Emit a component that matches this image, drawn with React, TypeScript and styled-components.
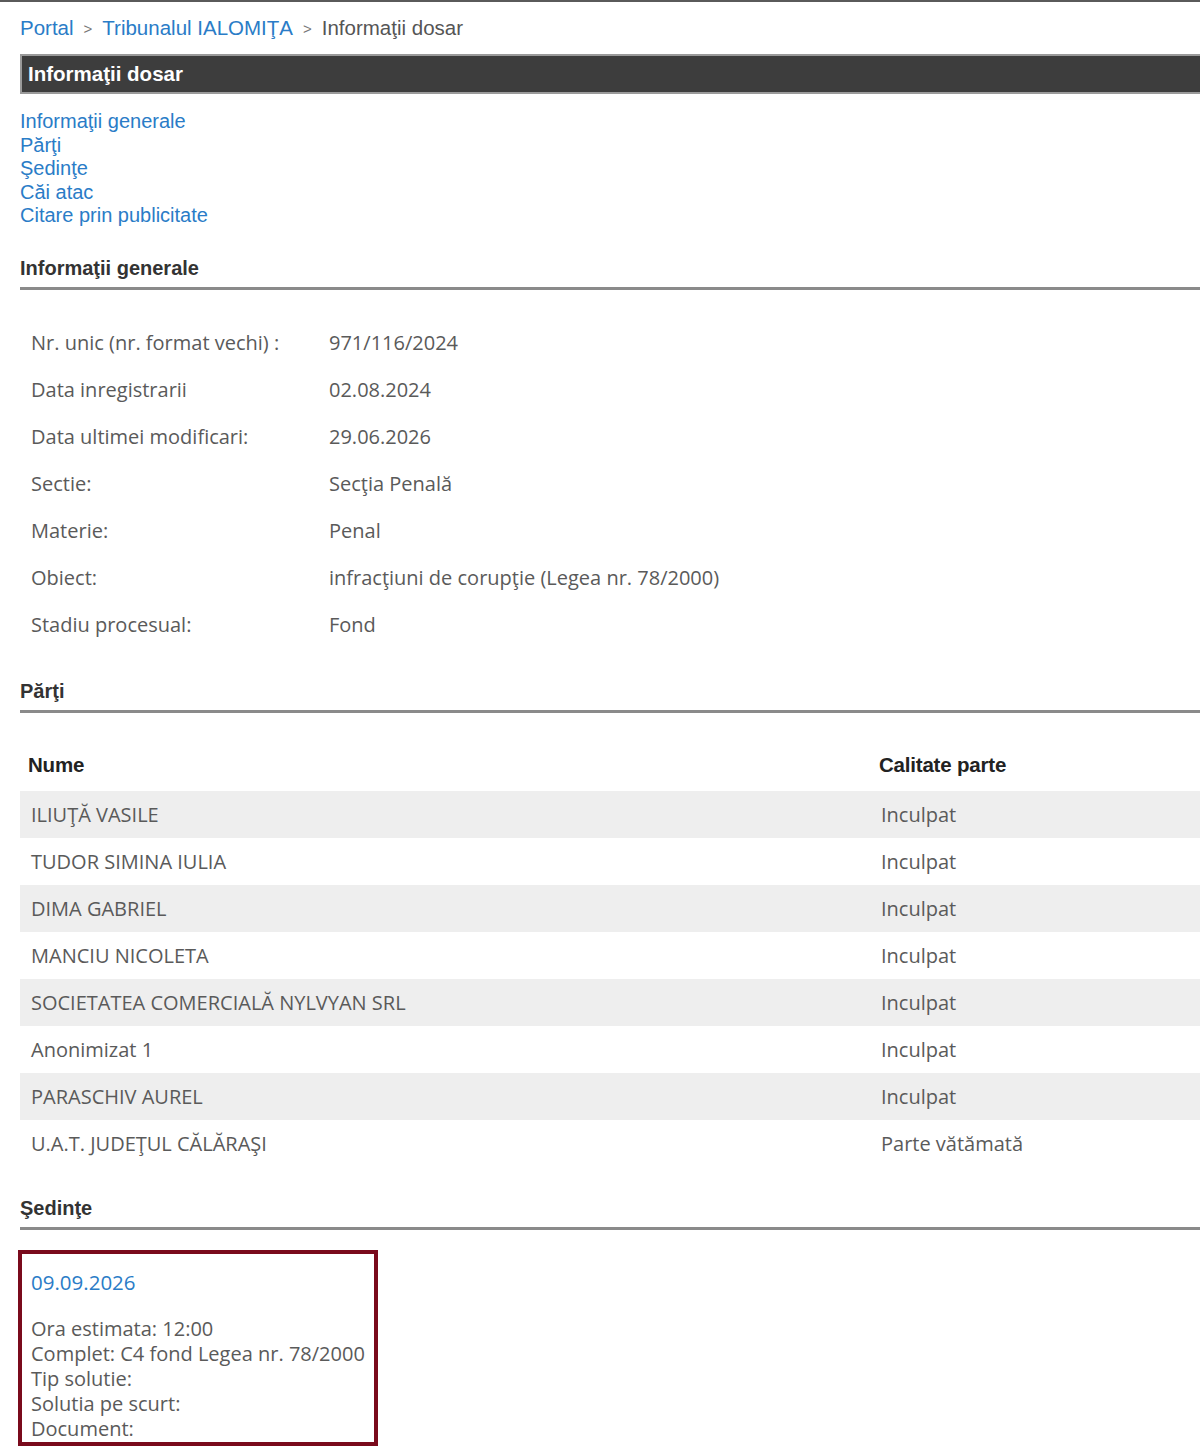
import styled, { createGlobalStyle } from 'styled-components'

const GlobalStyle = createGlobalStyle`
    body {
        margin: 0;
        background: #fff;
        font-family: "Liberation Sans", Arial, sans-serif;
        overflow: hidden;
    }
`

const Page = styled.div`
    border-top: 2px solid #5a5a5a;
    padding: 0 0 0 20px;
    width: 1180px;
    overflow: hidden;
`

const Breadcrumb = styled.div`
    display: flex;
    align-items: center;
    gap: 10px;
    height: 52px;
    font-size: 20.5px;
    color: #555;
    a {
        color: #2a7cc7;
        text-decoration: none;
    }
    .sep {
        font-size: 15px;
        color: #777;
    }
`

const TitleBar = styled.div`
    height: 36px;
    margin-right: -20px;
    background: #3d3d3d;
    border: 2px solid #9a9a9a;
    border-right: none;
    display: flex;
    align-items: center;
    padding-left: 6px;
    color: #fff;
    font-size: 20.5px;
    font-weight: bold;
`

const Nav = styled.nav`
    display: flex;
    flex-direction: column;
    padding-top: 16px;
    a {
        color: #2a7cc7;
        text-decoration: none;
        font-size: 20px;
        line-height: 23.5px;
    }
`

const SectionTitle = styled.h2<{ $top: number }>`
    margin: ${p => p.$top}px 0 0 0;
    font-size: 20px;
    font-weight: bold;
    color: #333;
    line-height: 22px;
    padding-bottom: 8px;
    border-bottom: 3px solid #8a8a8a;
`

const Table = styled.table<{ $top: number }>`
    border-collapse: collapse;
    table-layout: fixed;
    width: 100%;
    margin-top: ${p => p.$top}px;
    font-family: "Open Sans", "Liberation Sans", sans-serif;
    font-size: 20px;
    color: #5a5a5a;
    td, th {
        height: 47px;
        padding: 0 0 0 11px;
        text-align: left;
        vertical-align: middle;
        white-space: nowrap;
    }
`

const HeadCell = styled.th<{ $pad: number }>`
    font-family: "Liberation Sans", Arial, sans-serif;
    font-weight: bold;
    color: #222;
    font-size: 20.5px;
    letter-spacing: -0.2px;
    && {
        height: 51px;
        padding-left: ${p => p.$pad}px;
    }
`

const PartyRow = styled.tr<{ $shaded: boolean }>`
    background: ${p => (p.$shaded ? '#eeeeee' : '#fff')};
`

const HearingBox = styled.div`
    box-sizing: border-box;
    margin-top: 20px;
    margin-left: -2px;
    width: 360px;
    height: 196px;
    border: 4px solid #7a0a1c;
    padding: 16px 0 0 9px;
    font-family: "Open Sans", "Liberation Sans", sans-serif;
    font-size: 20px;
    color: #5a5a5a;
    line-height: 25px;
`

const HearingDate = styled.a`
    display: block;
    color: #2a7cc7;
    text-decoration: none;
    font-size: 20.5px;
    margin-bottom: 21px;
`

const info: [string, string][] = [
    ['Nr. unic (nr. format vechi) :', '971/116/2024'],
    ['Data inregistrarii', '02.08.2024'],
    ['Data ultimei modificari:', '29.06.2026'],
    ['Sectie:', 'Secţia Penală'],
    ['Materie:', 'Penal'],
    ['Obiect:', 'infracţiuni de corupţie (Legea nr. 78/2000)'],
    ['Stadiu procesual:', 'Fond'],
]

const parties: [string, string][] = [
    ['ILIUŢĂ VASILE', 'Inculpat'],
    ['TUDOR SIMINA IULIA', 'Inculpat'],
    ['DIMA GABRIEL', 'Inculpat'],
    ['MANCIU NICOLETA', 'Inculpat'],
    ['SOCIETATEA COMERCIALĂ NYLVYAN SRL', 'Inculpat'],
    ['Anonimizat 1', 'Inculpat'],
    ['PARASCHIV AUREL', 'Inculpat'],
    ['U.A.T. JUDEŢUL CĂLĂRAŞI', 'Parte vătămată'],
]

export default function App() {
    return (
        <>
            <GlobalStyle />
            <Page>
                <Breadcrumb>
                    <a href="#">Portal</a>
                    <span className="sep">&gt;</span>
                    <a href="#">Tribunalul IALOMIŢA</a>
                    <span className="sep">&gt;</span>
                    <span>Informaţii dosar</span>
                </Breadcrumb>
                <TitleBar>Informaţii dosar</TitleBar>
                <Nav>
                    <a href="#">Informaţii generale</a>
                    <a href="#">Părţi</a>
                    <a href="#">Şedinţe</a>
                    <a href="#">Căi atac</a>
                    <a href="#">Citare prin publicitate</a>
                </Nav>

                <SectionTitle $top={29}>Informaţii generale</SectionTitle>
                <Table $top={29}>
                    <colgroup>
                        <col style={{ width: 298 }} />
                        <col />
                    </colgroup>
                    <tbody>
                        { info.map(([label, value]) =>
                            <tr key={label}>
                                <td>{ label }</td>
                                <td>{ value }</td>
                            </tr>)
                        }
                    </tbody>
                </Table>

                <SectionTitle $top={32}>Părţi</SectionTitle>
                <Table $top={27}>
                    <colgroup>
                        <col style={{ width: 850 }} />
                        <col />
                    </colgroup>
                    <thead>
                        <tr>
                            <HeadCell $pad={8}>Nume</HeadCell>
                            <HeadCell $pad={9}>Calitate parte</HeadCell>
                        </tr>
                    </thead>
                    <tbody>
                        { parties.map(([name, role], i) =>
                            <PartyRow key={name} $shaded={i % 2 === 0}>
                                <td>{ name }</td>
                                <td>{ role }</td>
                            </PartyRow>)
                        }
                    </tbody>
                </Table>

                <SectionTitle $top={30}>Şedinţe</SectionTitle>
                <HearingBox>
                    <HearingDate href="#">09.09.2026</HearingDate>
                    <div>Ora estimata: 12:00</div>
                    <div>Complet: C4 fond Legea nr. 78/2000</div>
                    <div>Tip solutie:</div>
                    <div>Solutia pe scurt:</div>
                    <div>Document:</div>
                </HearingBox>
            </Page>
        </>
    )
}
